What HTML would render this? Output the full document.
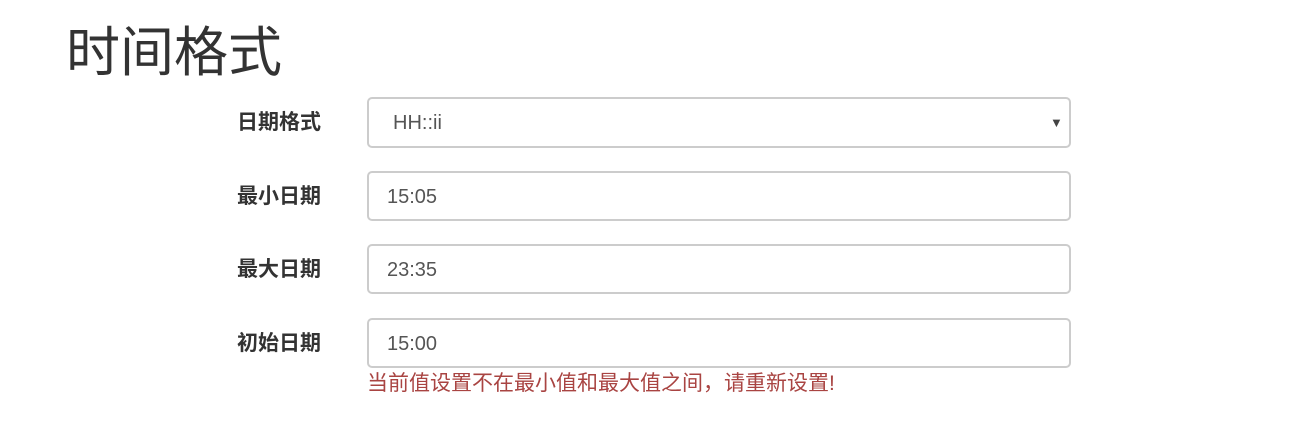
<!DOCTYPE html>
<html><head><meta charset="utf-8"><style>
body{margin:0;background:#fff;font-family:"Liberation Sans","Noto Sans CJK SC",sans-serif;color:#333;width:1302px;height:426px;overflow:hidden;position:relative}
h1{position:absolute;left:66px;top:18px;margin:0;font-weight:400;font-size:54px;line-height:70px;color:#333}
.lbl{position:absolute;left:180px;width:141px;text-align:right;font-weight:bold;font-size:21px;line-height:26px}
.inp{position:absolute;left:367px;width:700px;height:46px;border:2px solid #ccc;border-radius:5px;box-sizing:content-box;font-size:20px;line-height:48px;color:#555}
.inp span{position:absolute;left:18px}
.err{position:absolute;left:367px;top:371px;font-size:21px;color:#a94442;line-height:26px}
.arr{position:absolute;top:0;font-size:13px;color:#444}
</style></head><body>
<h1>时间格式</h1>
<div class="lbl" style="top:110px">日期格式</div>
<div class="inp" style="top:97px;height:47px"><span style="left:24px">HH::ii</span><span class="arr" style="left:681px">▼</span></div>
<div class="lbl" style="top:184px">最小日期</div>
<div class="inp" style="top:171px"><span>15:05</span></div>
<div class="lbl" style="top:257px">最大日期</div>
<div class="inp" style="top:244px"><span>23:35</span></div>
<div class="lbl" style="top:331px">初始日期</div>
<div class="inp" style="top:318px"><span>15:00</span></div>
<div class="err">当前值设置不在最小值和最大值之间，请重新设置!</div>
</body></html>
